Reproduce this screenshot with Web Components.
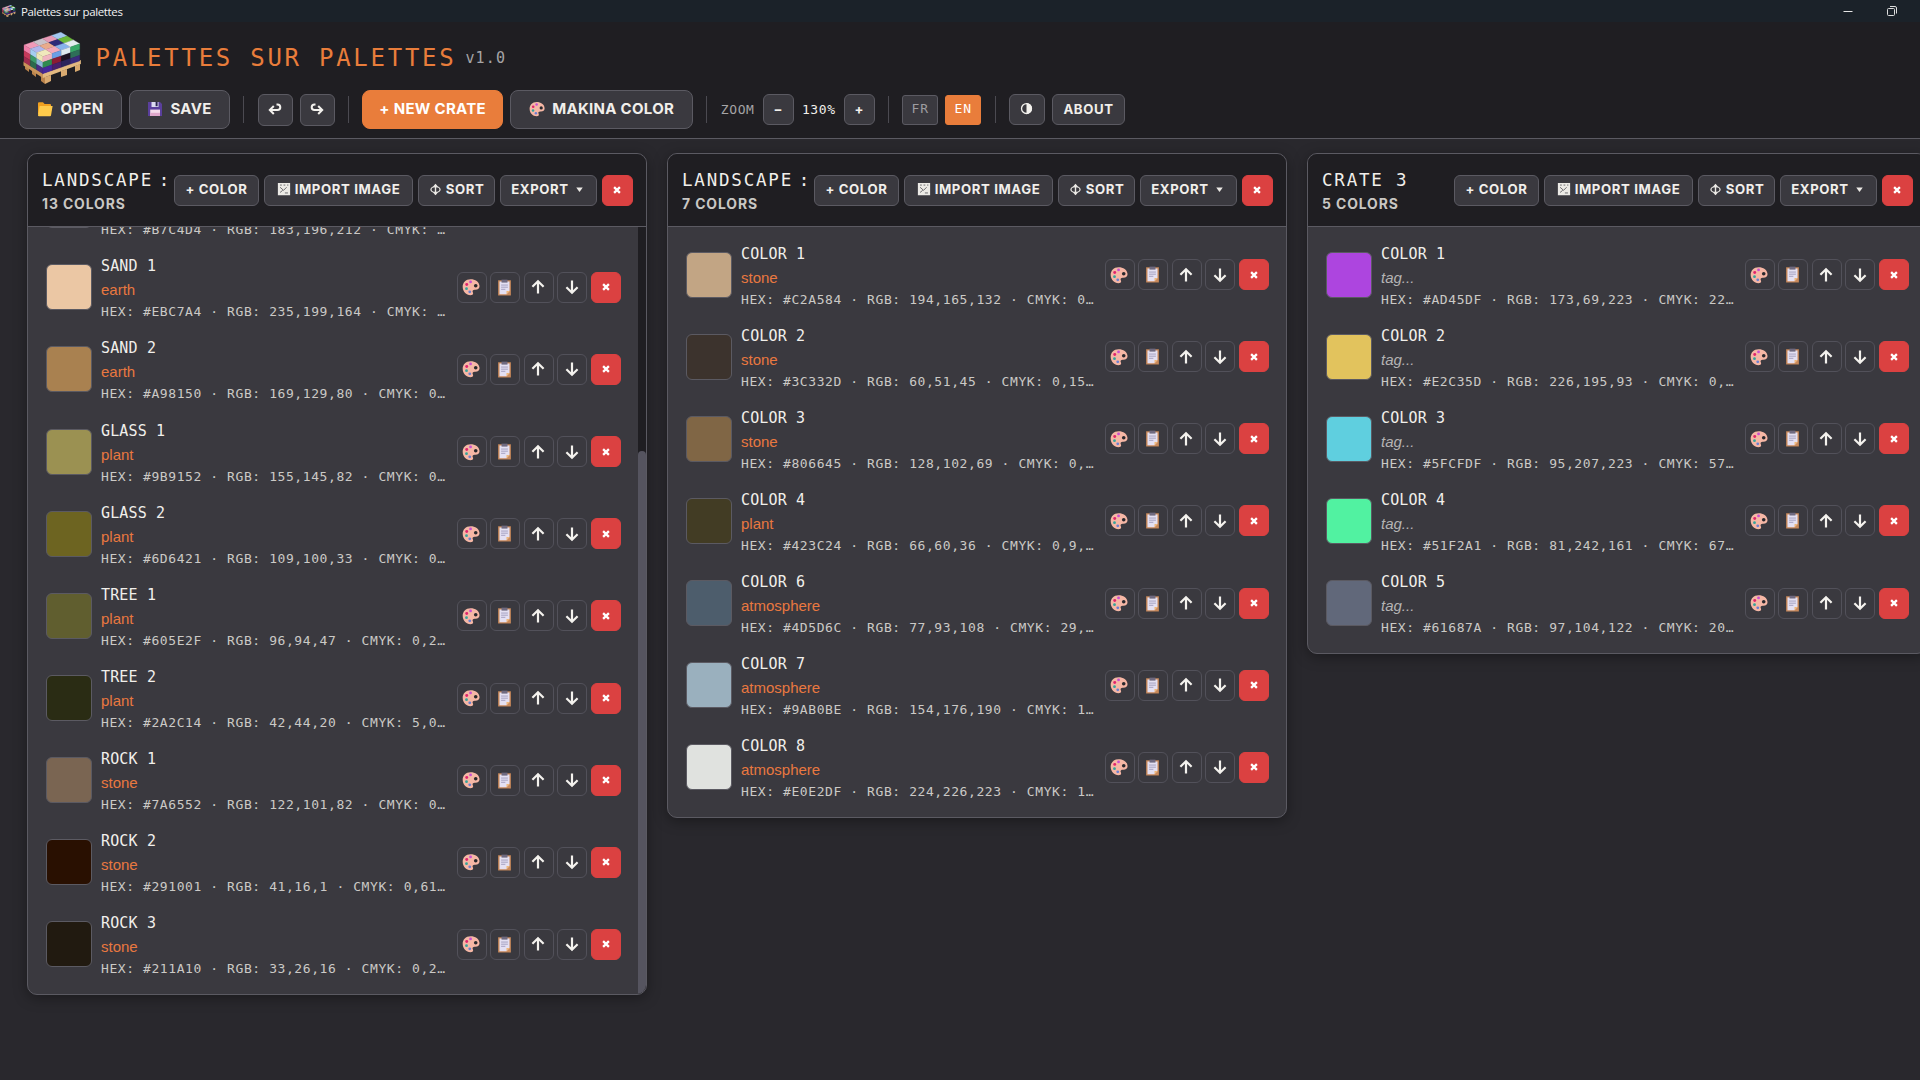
<!DOCTYPE html>
<html lang="en">
<head>
<meta charset="utf-8">
<title>Palettes sur palettes</title>
<style>
  html, body {
    margin: 0;
    height: 100%;
    overflow: hidden;
    background: #29282d;
  }
</style>
</head>
<body>
<palette-app></palette-app>

<script>
const ICONS = {
  folder: '<path fill="#f0a020" d="M1 2.2q0-1 1-1h4l1.6 1.8H13q1 0 1 1V13H1z"/><path fill="#ffcb4c" d="M2.6 5H15.6L14 14.4q-.2.800-1 .800H2q-1 0-1-1z"/>',
  disk: '<path fill="#5a3f9c" d="M1 1H13l2 2v12H1z"/><path fill="#dcdcf0" d="M4.5 1h7v5h-7z"/><path fill="#2b2450" d="M8.600 1h2v4.200h-2z"/><path fill="#f6dcec" d="M3.200 8.600h9.800V15H3.200z"/><path fill="#e0a8cc" d="M3.200 11.800h9.800V15H3.200z"/>',
  palette: '<path fill="#f6b7a5" d="M7.6 1C3.3 1 .6 4 .6 7.8c0 4.3 3.1 7.5 7 7.5 2.3 0 2.6-1.4 2-2.6-.7-1.5.2-2.4 2-2.3 2.400.1 4.1-.9 4-3.2C15.400 3.300 11.800 1 7.600 1z"/><circle cx="12.200" cy="6.900" r="1.600" fill="#29282d"/><circle cx="7.600" cy="3.500" r="1.250" fill="#c94fd0"/><circle cx="4.200" cy="5.700" r="1.300" fill="#e0246c"/><circle cx="4" cy="9.500" r="1.250" fill="#35a39b"/><circle cx="6.900" cy="12.300" r="1.250" fill="#6b7fd0"/>',
  clipboard: '<path fill="#c9895a" d="M2 1.200h12v14.300H2z"/><path fill="#e4e0f2" d="M3.300 2.400h9.400v9l-2.800 3H3.300z"/><path fill="#f0b878" d="M12.700 11.400l-2.800 3v-3z"/><path fill="#6f6a80" d="M5.200.600h5.600v2.800H5.200z"/><path stroke="#9a95b8" stroke-width=".8" d="M4.800 5.700h6.400M4.800 7.700h6.400M4.800 9.700h4"/>',
  up: '<path fill="none" stroke="#f4f2ee" stroke-width="2.200" d="M8 14.500V2.400M2.400 7.800L8 2.200l5.600 5.600"/>',
  down: '<path fill="none" stroke="#f4f2ee" stroke-width="2.200" d="M8 1.500v12.100M2.400 8.200L8 13.800l5.600-5.600"/>',
  cross: '<path stroke="#fff" stroke-width="2.600" d="M4.700 4.700l6.600 6.600M11.300 4.700l-6.600 6.600"/>',
  undo: '<path fill="none" stroke="#f4f2ee" stroke-width="2" d="M3 9h7.500a2.800 2.800 0 000-5.600H9.500M6.800 5L2.800 9l4 4"/>',
  redo: '<path fill="none" stroke="#f4f2ee" stroke-width="2" d="M13 9H5.500a2.800 2.800 0 010-5.600h1M9.200 5l4 4-4 4"/>',
  contrast: '<circle cx="8" cy="8" r="5.300" fill="none" stroke="#f4f2ee" stroke-width="1.400"/><path fill="#f4f2ee" d="M8 2.200a5.800 5.800 0 010 11.600z"/>',
  picture: '<path fill="#eceae6" d="M1 1h14v14H1z"/><path stroke="#3a393f" stroke-width=".8" fill="none" d="M3.500 3.500h2M7.500 3.500h2M11.500 3.500h1.500M3.500 6l4 3.500 3.500-3.500M3.500 12l3-2.500M9 12.500h3.500"/>',
  sort: '<ellipse cx="8" cy="8" rx="5.600" ry="3.600" fill="none" stroke="#eceae6" stroke-width="1.500"/><path stroke="#eceae6" stroke-width="1.700" d="M8 2v12"/><path fill="#eceae6" d="M4.800 4.600L8 .800l3.200 3.800zM4.800 11.400L8 15.200l3.200-3.800z"/>',
  caret: '<path fill="#eceae6" d="M4 5.500h8L8 11z"/>',
  minimize: '<path stroke="#e6e6e6" d="M2.500 8.500h9"/>',
  restore: '<rect x="2.500" y="5.500" width="7" height="7" rx="1" fill="none" stroke="#ddd"/><path fill="none" stroke="#ddd" d="M5 3.500h5q1.500 0 1.500 1.500v5.500"/>'
}

class UiIcon extends HTMLElement {
  connectedCallback () {
    const size = this.getAttribute('size') || 16
    this.attachShadow({ mode: 'open' }).innerHTML = `
      <style>
        :host { display: inline-flex; flex: none; }
        svg { display: block; }
      </style>
      <svg width="${size}" height="${size}" viewBox="0 0 16 16">${ICONS[this.getAttribute('name')]}</svg>
    `
  }
}
customElements.define('ui-icon', UiIcon)

// kinds: large, square, mini, lang; tones: accent, danger
class UiButton extends HTMLElement {
  connectedCallback () {
    this.attachShadow({ mode: 'open' }).innerHTML = `
      <style>
        :host {
          display: flex;
          flex: none;
          box-sizing: border-box;
          width: ${this.getAttribute('w')}px;
          height: 31px;
          padding-bottom: 2px;
          border: 1px solid #5b5a62;
          border-radius: 6px;
          background: #3a393f;
          color: #f1efeb;
          align-items: center;
          justify-content: center;
          gap: 4px;
          font: 700 13.200px Inter, "Open Sans", sans-serif;
          letter-spacing: 0.600px;
          white-space: nowrap;
        }
        :host([kind="large"]) {
          height: 39px;
          border-radius: 8px;
          font-size: 15px;
          letter-spacing: 0.300px;
          gap: 7px;
        }
        :host([kind="square"]) { height: 32px; }
        :host([kind="mini"]) { background: none; border-color: #52515a; padding: 0 1px 0 0; }
        :host([kind="lang"]) {
          height: 30px;
          border-radius: 3px;
          font: 13px "DejaVu Sans Mono", monospace;
          letter-spacing: 1px;
          color: #9d9ca0;
        }
        :host([tone="accent"]) { background: #e97d3b; border-color: #e97d3b; color: #fff; }
        :host([tone="danger"]) { background: #db4141; border-color: #db4141; color: #fff; padding: 0 1px 0 0; }
      </style>
      <slot></slot>
    `
  }
}
customElements.define('ui-button', UiButton)

class PalletLogo extends HTMLElement {
  connectedCallback () {
    const size = this.getAttribute('size')
    // back edge to front edge, four cubes wide and three deep
    const top = ['#f09ab8', '#c9c2ca', '#e79ab6', '#a3c8f0', '#b0b6ec', '#e9ab8c', '#2c2a78', '#6ab83a', '#f0e8bc', '#f2a8ba', '#86b2ec', '#e2ecee']
    const left = ['#ee7fa8', '#a4cdf0', '#ece6b4', '#c63a5c', '#3a9a68', '#8fb8d8', '#a02c50', '#2c6a4c', '#4a2c84']
    const right = ['#f0b4c0', '#6b9fe6', '#dfe8ee', '#38a868', '#2f8a50', '#8c1c34', '#1d1222', '#2e6e58', '#44289a', '#48206a', '#2c245c', '#3a2a7c']
    let cells = ''
    const quad = (o, u, v, fill) => {
      const p = [o, [o[0] + u[0], o[1] + u[1]], [o[0] + u[0] + v[0], o[1] + u[1] + v[1]], [o[0] + v[0], o[1] + v[1]]]
      cells += `<polygon points="${p.map(q => q.join()).join(' ')}" fill="${fill}" stroke="${fill}" stroke-width=".3"/>`
    }
    top.forEach((c, i) => {
      const a = i % 4
      const b = Math.floor(i / 4)
      quad([1 + a * 9.200 + b * 6.300, 13 - a * 3.200 + b * 3.870], [9.200, -3.200], [6.300, 3.870], c)
    })
    left.forEach((c, i) => {
      const a = i % 3
      quad([1 + a * 6.300, 13 + a * 3.870 + Math.floor(i / 3) * 5.700], [6.300, 3.870], [0, 5.700], c)
    })
    right.forEach((c, i) => {
      const a = i % 4
      quad([19.900 + a * 9.200, 24.600 - a * 3.200 + Math.floor(i / 4) * 5.700], [9.200, -3.200], [0, 5.700], c)
    })
    this.attachShadow({ mode: 'open' }).innerHTML = `
      <style>
        :host { display: block; flex: none; }
        svg { display: block; }
      </style>
      <svg width="${size}" height="${size * 0.9}" viewBox="0 0 60 54">
        <path fill="#b9834c" d="M2 31l4 2v7l-4-3zM9 36l4 2v7l-4-3zM18 42l4 3v7l-4-3z"/>
        <path fill="#d9aa70" d="M22 45l6-2v6l-6 3zM38 39l6-2v6l-6 2zM52 34l5-2v6l-5 2z"/>
        <path fill="#c9945a" d="M.500 29.500l19.400 12V46L.500 33.500z"/>
        <path fill="#e3b980" d="M19.900 41.500l38-13.500v4L19.900 46z"/>
        ${cells}
      </svg>
    `
  }
}
customElements.define('pallet-logo', PalletLogo)

class TitleBar extends HTMLElement {
  connectedCallback () {
    this.attachShadow({ mode: 'open' }).innerHTML = `
      <style>
        :host {
          display: flex;
          align-items: center;
          height: 22px;
          padding: 0 19px 0 2px;
          background: #1b2229;
          color: #f2f2f2;
          font: 11.500px "Open Sans", "Noto Sans", sans-serif;
        }
        span { flex: 1; margin-left: 5px; letter-spacing: -0.350px; }
        ui-icon + ui-icon { margin-left: 28px; }
      </style>
      <pallet-logo size="14"></pallet-logo>
      <span>Palettes sur palettes</span>
      <ui-icon name="minimize"></ui-icon>
      <ui-icon name="restore"></ui-icon>
    `
  }
}
customElements.define('title-bar', TitleBar)

class AppHeader extends HTMLElement {
  connectedCallback () {
    this.attachShadow({ mode: 'open' }).innerHTML = `
      <style>
        :host {
          display: block;
          box-sizing: border-box;
          height: 117px;
          border-bottom: 1px solid #5b5a62;
          background: #1f1e22;
          font-family: "DejaVu Sans Mono", monospace;
        }
        .brand {
          display: flex;
          align-items: center;
          height: 68px;
          padding-left: 23px;
        }
        .brand pallet-logo { margin-top: 6px; }
        h1 {
          margin: 3px 0 0 12.500px;
          color: #e97d3b;
          font-size: 24px;
          font-weight: 400;
          letter-spacing: 2.740px;
        }
        .version { color: #a5a4a6; font-size: 15px; letter-spacing: 1.100px; margin: 3px 0 0 9px; }
        .tools {
          display: flex;
          align-items: center;
          height: 39px;
          padding-left: 19px;
          gap: 7px;
        }
        i { width: 1px; height: 27px; margin: 0 6.300px; background: #4b4a51; }
        .label { width: 35px; font-size: 13px; letter-spacing: 0.600px; color: #a5a4a6; }
        .value { width: 36px; font-size: 13px; letter-spacing: 0.600px; color: #f1efeb; text-align: center; }
      </style>
      <div class="brand">
        <pallet-logo size="60"></pallet-logo>
        <h1>PALETTES SUR PALETTES</h1>
        <span class="version">v1.0</span>
      </div>
      <div class="tools">
        <ui-button kind="large" w="103"><ui-icon name="folder"></ui-icon>OPEN</ui-button>
        <ui-button kind="large" w="101"><ui-icon name="disk"></ui-icon>SAVE</ui-button>
        <i></i>
        <ui-button kind="square" w="35"><ui-icon name="undo"></ui-icon></ui-button>
        <ui-button kind="square" w="35"><ui-icon name="redo"></ui-icon></ui-button>
        <i></i>
        <ui-button kind="large" tone="accent" w="141">+ NEW CRATE</ui-button>
        <ui-button kind="large" w="183"><ui-icon name="palette"></ui-icon>MAKINA COLOR</ui-button>
        <i></i>
        <span class="label">ZOOM</span>
        <ui-button w="31">−</ui-button>
        <span class="value">130%</span>
        <ui-button w="31">+</ui-button>
        <i></i>
        <ui-button kind="lang" w="36">FR</ui-button>
        <ui-button kind="lang" tone="accent" w="36">EN</ui-button>
        <i></i>
        <ui-button w="36"><ui-icon name="contrast" size="15"></ui-icon></ui-button>
        <ui-button w="73">ABOUT</ui-button>
      </div>
    `
  }
}
customElements.define('app-header', AppHeader)

class ColorRow extends HTMLElement {
  connectedCallback () {
    const tag = this.getAttribute('tag')
    this.attachShadow({ mode: 'open' }).innerHTML = `
      <style>
        :host {
          display: flex;
          flex: none;
          align-items: center;
          box-sizing: border-box;
          height: 82.150px;
          padding: 0 17px 0 18px;
          font-family: "DejaVu Sans Mono", monospace;
          color: #f1efeb;
        }
        .swatch {
          box-sizing: border-box;
          width: 46px;
          height: 46px;
          border: 1px solid #5b5a62;
          border-radius: 6px;
          background: ${this.getAttribute('color')};
        }
        .info { flex: 1; min-width: 0; margin-left: 9px; white-space: nowrap; }
        .name { margin-top: 2px; font-size: 15px; line-height: 23px; letter-spacing: 0.150px; }
        .tag { font: 15px/24px "Liberation Sans", Arial, sans-serif; color: #e97840; }
        .empty { font-style: italic; color: #b5b4b4; }
        .values { font-size: 13px; line-height: 19px; letter-spacing: 0.580px; color: #cbc9c6; }
        .actions { display: flex; gap: 3.600px; }
      </style>
      <div class="swatch"></div>
      <div class="info">
        <div class="name">${this.getAttribute('name')}</div>
        <div class="tag ${tag ? '' : 'empty'}">${tag || 'tag...'}</div>
        <div class="values"><slot></slot></div>
      </div>
      <div class="actions">
        <ui-button kind="mini" w="30"><ui-icon name="palette" size="18"></ui-icon></ui-button>
        <ui-button kind="mini" w="30"><ui-icon name="clipboard" size="17"></ui-icon></ui-button>
        <ui-button kind="mini" w="30"><ui-icon name="up"></ui-icon></ui-button>
        <ui-button kind="mini" w="30"><ui-icon name="down"></ui-icon></ui-button>
        <ui-button tone="danger" w="30"><ui-icon name="cross" size="14"></ui-icon></ui-button>
      </div>
    `
  }
}
customElements.define('color-row', ColorRow)

class ColorCrate extends HTMLElement {
  connectedCallback () {
    this.attachShadow({ mode: 'open' }).innerHTML = `
      <style>
        :host {
          display: block;
          flex: none;
          box-sizing: border-box;
          width: 620px;
          border: 1px solid #5b5a62;
          border-radius: 10px;
          background: #3a393f;
          overflow: hidden;
          box-shadow: 0 3px 14px rgba(0, 0, 0, 0.350);
        }
        header {
          display: flex;
          align-items: center;
          box-sizing: border-box;
          height: 73px;
          padding: 0 13px 0 14px;
          border-bottom: 1px solid #5b5a62;
          background: #1f1e22;
        }
        .heading { flex: 1; min-width: 0; margin-top: 4px; }
        .title {
          font: 17.500px/24px "DejaVu Sans Mono", monospace;
          letter-spacing: 1.800px;
          color: #f1efeb;
          white-space: nowrap;
        }
        :host([tight]) .title { word-spacing: -6.500px; }
        .count {
          font: 700 13.900px/24px Inter, "Open Sans", sans-serif;
          letter-spacing: 0.900px;
          color: #c9c7c4;
        }
        .buttons { display: flex; gap: 5px; margin-left: 3px; }
        .body { display: flex; }
        .rows {
          flex: 1;
          min-width: 0;
          display: flex;
          flex-direction: column;
          padding: 6.500px 0 8.500px;
        }
        .bar { display: none; width: 8px; background: #1f1e22; }
        .thumb { height: 544px; margin-top: 224px; border-radius: 4px 4px 0 0; background: #55545f; }
        :host([scrolled]) .body { height: 767px; overflow: hidden; }
        :host([scrolled]) .rows { justify-content: flex-end; overflow: hidden; }
        :host([scrolled]) .bar { display: block; }
      </style>
      <header>
        <div class="heading">
          <div class="title">${this.getAttribute('name')}</div>
          <div class="count">${this.getAttribute('count')} COLORS</div>
        </div>
        <div class="buttons">
          <ui-button w="85">+ COLOR</ui-button>
          <ui-button w="149"><ui-icon name="picture" size="14"></ui-icon>IMPORT IMAGE</ui-button>
          <ui-button w="77"><ui-icon name="sort" size="13"></ui-icon>SORT</ui-button>
          <ui-button w="97">EXPORT<ui-icon name="caret" size="13"></ui-icon></ui-button>
          <ui-button tone="danger" w="31"><ui-icon name="cross" size="14"></ui-icon></ui-button>
        </div>
      </header>
      <div class="body">
        <div class="rows"><slot></slot></div>
        <div class="bar"><div class="thumb"></div></div>
      </div>
    `
  }
}
customElements.define('color-crate', ColorCrate)

class PaletteApp extends HTMLElement {
  connectedCallback () {
    this.attachShadow({ mode: 'open' }).innerHTML = `
      <style>
        :host { display: block; height: 100%; overflow: hidden; }
        main { display: flex; align-items: flex-start; gap: 20px; padding: 14px 27px; }
      </style>
      <title-bar></title-bar>
      <app-header></app-header>
      <main>
        <color-crate name="LANDSCAPE :" count="13" tight scrolled>
          <color-row name="&nbsp;" tag="&nbsp;" color="#55545f">HEX: #B7C4D4 · RGB: 183,196,212 · CMYK: …</color-row>
          <color-row name="SAND 1" tag="earth" color="#EBC7A4">HEX: #EBC7A4 · RGB: 235,199,164 · CMYK: …</color-row>
          <color-row name="SAND 2" tag="earth" color="#A98150">HEX: #A98150 · RGB: 169,129,80 · CMYK: 0…</color-row>
          <color-row name="GLASS 1" tag="plant" color="#9B9152">HEX: #9B9152 · RGB: 155,145,82 · CMYK: 0…</color-row>
          <color-row name="GLASS 2" tag="plant" color="#6D6421">HEX: #6D6421 · RGB: 109,100,33 · CMYK: 0…</color-row>
          <color-row name="TREE 1" tag="plant" color="#605E2F">HEX: #605E2F · RGB: 96,94,47 · CMYK: 0,2…</color-row>
          <color-row name="TREE 2" tag="plant" color="#2A2C14">HEX: #2A2C14 · RGB: 42,44,20 · CMYK: 5,0…</color-row>
          <color-row name="ROCK 1" tag="stone" color="#7A6552">HEX: #7A6552 · RGB: 122,101,82 · CMYK: 0…</color-row>
          <color-row name="ROCK 2" tag="stone" color="#291001">HEX: #291001 · RGB: 41,16,1 · CMYK: 0,61…</color-row>
          <color-row name="ROCK 3" tag="stone" color="#211A10">HEX: #211A10 · RGB: 33,26,16 · CMYK: 0,2…</color-row>
        </color-crate>
        <color-crate name="LANDSCAPE :" count="7" tight>
          <color-row name="COLOR 1" tag="stone" color="#C2A584">HEX: #C2A584 · RGB: 194,165,132 · CMYK: 0…</color-row>
          <color-row name="COLOR 2" tag="stone" color="#3C332D">HEX: #3C332D · RGB: 60,51,45 · CMYK: 0,15…</color-row>
          <color-row name="COLOR 3" tag="stone" color="#806645">HEX: #806645 · RGB: 128,102,69 · CMYK: 0,…</color-row>
          <color-row name="COLOR 4" tag="plant" color="#423C24">HEX: #423C24 · RGB: 66,60,36 · CMYK: 0,9,…</color-row>
          <color-row name="COLOR 6" tag="atmosphere" color="#4D5D6C">HEX: #4D5D6C · RGB: 77,93,108 · CMYK: 29,…</color-row>
          <color-row name="COLOR 7" tag="atmosphere" color="#9AB0BE">HEX: #9AB0BE · RGB: 154,176,190 · CMYK: 1…</color-row>
          <color-row name="COLOR 8" tag="atmosphere" color="#E0E2DF">HEX: #E0E2DF · RGB: 224,226,223 · CMYK: 1…</color-row>
        </color-crate>
        <color-crate name="CRATE 3" count="5">
          <color-row name="COLOR 1" color="#AD45DF">HEX: #AD45DF · RGB: 173,69,223 · CMYK: 22…</color-row>
          <color-row name="COLOR 2" color="#E2C35D">HEX: #E2C35D · RGB: 226,195,93 · CMYK: 0,…</color-row>
          <color-row name="COLOR 3" color="#5FCFDF">HEX: #5FCFDF · RGB: 95,207,223 · CMYK: 57…</color-row>
          <color-row name="COLOR 4" color="#51F2A1">HEX: #51F2A1 · RGB: 81,242,161 · CMYK: 67…</color-row>
          <color-row name="COLOR 5" color="#61687A">HEX: #61687A · RGB: 97,104,122 · CMYK: 20…</color-row>
        </color-crate>
      </main>
    `
  }
}
customElements.define('palette-app', PaletteApp)
</script>
</body>
</html>
